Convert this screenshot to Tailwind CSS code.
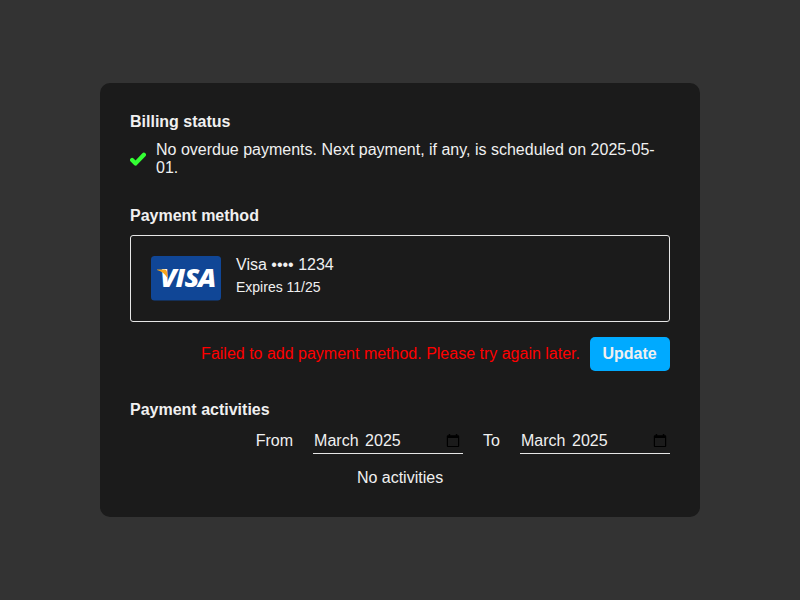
<!DOCTYPE html>
<html lang="en">
<head>
<meta charset="utf-8">
<title>Billing</title>
<script src="https://cdn.jsdelivr.net/npm/@tailwindcss/browser@4"></script>
</head>
<body class="flex h-screen items-center justify-center bg-[#333] font-['Liberation_Sans',Arial,sans-serif] text-base leading-[18px] text-[#f0f0f0]">
<main class="flex w-[600px] flex-col gap-[30px] rounded-[10px] bg-[#1b1b1b] p-[30px]">
  <section class="flex flex-col gap-2.5">
    <h2 class="font-bold">Billing status</h2>
    <div class="flex items-center gap-2.5">
      <svg class="size-4 shrink-0" viewBox="0 0 16 16" fill="none" stroke="#33ff33" stroke-width="4.2" stroke-linecap="round" stroke-linejoin="round"><path d="M2.1 8.9 5.6 12.4 13.9 3.7"/></svg>
      <p>No overdue payments. Next payment, if any, is scheduled on 2025-05-01.</p>
    </div>
  </section>
  <section class="flex flex-col">
    <h2 class="mb-2.5 font-bold">Payment method</h2>
    <div class="flex h-[87px] gap-[15px] rounded-[3px] border border-[#e6e6e6] p-5">
      <svg class="h-[45px] w-[70px] shrink-0" viewBox="0 0 70 45">
        <rect width="70" height="44.6" rx="3.5" fill="#104696"/>
        <text transform="scale(1.09 1)" x="8.2 22.6 30.8 43.2" y="31.4" fill="#fff" font-family="'Open Sans', sans-serif" font-weight="800" font-style="italic" font-size="24.8">VISA</text>
        <path d="M6 13.5H13.6Q15.4 13.5 15.8 15.3L16.8 22.5Q13 15.8 6 14Z" fill="#f5a51c"/>
      </svg>
      <div>
        <p>Visa •••• 1234</p>
        <p class="mt-[5px] text-sm leading-4">Expires 11/25</p>
      </div>
    </div>
    <div class="mt-[15px] flex items-center justify-end gap-2.5">
      <p class="text-[#ff0000]">Failed to add payment method. Please try again later.</p>
      <button class="h-[34px] w-20 rounded-[5px] bg-[#00aaff] pr-px font-bold">Update</button>
    </div>
  </section>
  <section class="flex flex-col">
    <h2 class="mb-2.5 font-bold">Payment activities</h2>
    <div class="flex justify-end gap-5">
      <span class="pt-[3px]">From</span>
      <button class="flex h-[25px] w-[150px] border-b border-[#e6e6e6] pt-[3px] pl-px pr-[3px] text-left">
        <span class="w-[51px]">March</span><span>2025</span>
        <svg class="mt-px ml-auto h-[15px] w-[14px]" viewBox="0 0 14 15"><path fill="#000" fill-rule="evenodd" d="M2.7 1H4.2V2.2H9.8V1H11.3V2.2H12.2Q13.2 2.2 13.2 3.2V13Q13.2 14 12.2 14H1.8Q.8 14 .8 13V3.2Q.8 2.2 1.8 2.2H2.7ZM2 5V12.9H12V5Z"/></svg>
      </button>
      <span class="pt-[3px]">To</span>
      <button class="flex h-[25px] w-[150px] border-b border-[#e6e6e6] pt-[3px] pl-px pr-[3px] text-left">
        <span class="w-[51px]">March</span><span>2025</span>
        <svg class="mt-px ml-auto h-[15px] w-[14px]" viewBox="0 0 14 15"><path fill="#000" fill-rule="evenodd" d="M2.7 1H4.2V2.2H9.8V1H11.3V2.2H12.2Q13.2 2.2 13.2 3.2V13Q13.2 14 12.2 14H1.8Q.8 14 .8 13V3.2Q.8 2.2 1.8 2.2H2.7ZM2 5V12.9H12V5Z"/></svg>
      </button>
    </div>
    <p class="mt-[15px] text-center">No activities</p>
  </section>
</main>
</body>
</html>
